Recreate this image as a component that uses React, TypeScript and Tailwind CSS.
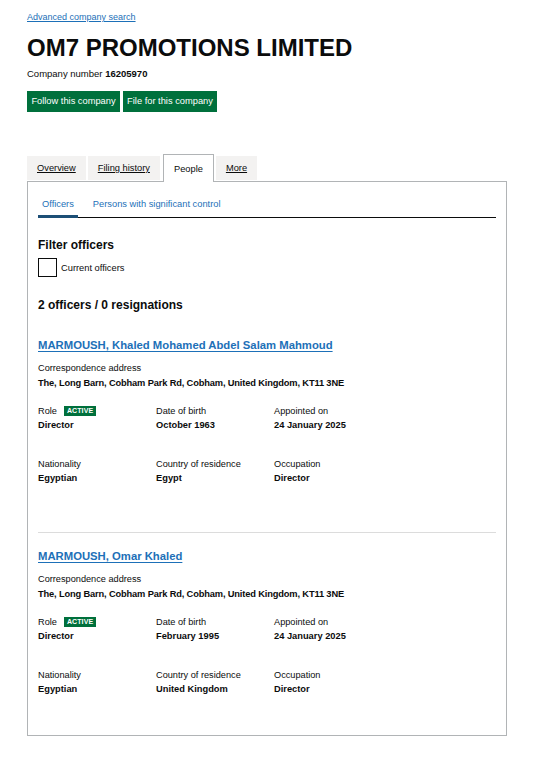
import React from "react";

const font = { fontFamily: '"Liberation Sans", Arial, sans-serif' };

type Field = { label: string; value: string; badge?: boolean };

function Cell({ f }: { f: Field }) {
  return (
    <div>
      <div className="flex items-center h-[12px] text-[9.2px] leading-[12px] text-[#0b0c0c]">
        <span>{f.label}</span>
        {f.badge && (
          <span className="ml-[7px] bg-[#00703c] text-white font-bold text-[7px] leading-[10px] h-[10px] px-[3px] tracking-[0.1px]">
            ACTIVE
          </span>
        )}
      </div>
      <div className="mt-[2px] text-[9.3px] leading-[12px] font-bold text-[#0b0c0c]">{f.value}</div>
    </div>
  );
}

function Officer({
  name,
  dob,
  country,
  first,
}: {
  name: string;
  dob: string;
  country: string;
  first?: boolean;
}) {
  return (
    <div className={first ? "mt-[25px]" : "mt-[16px]"}>
      <a
        href="#"
        className="block text-[11.3px] leading-[14px] font-bold text-[#1d70b8] underline decoration-1 underline-offset-[2px]"
      >
        {name}
      </a>
      <div className="mt-[10px] text-[9.2px] leading-[12px] text-[#0b0c0c]">Correspondence address</div>
      <div className="mt-[3px] text-[9.3px] leading-[12px] font-bold text-[#0b0c0c] tracking-[-0.15px]">
        The, Long Barn, Cobham Park Rd, Cobham, United Kingdom, KT11 3NE
      </div>
      <div className="mt-[16px] grid grid-cols-[118px_118px_118px]">
        <Cell f={{ label: "Role", value: "Director", badge: true }} />
        <Cell f={{ label: "Date of birth", value: dob }} />
        <Cell f={{ label: "Appointed on", value: "24 January 2025" }} />
      </div>
      <div className="mt-[27px] grid grid-cols-[118px_118px_118px]">
        <Cell f={{ label: "Nationality", value: "Egyptian" }} />
        <Cell f={{ label: "Country of residence", value: country }} />
        <Cell f={{ label: "Occupation", value: "Director" }} />
      </div>
    </div>
  );
}

export default function App() {
  return (
    <div style={font} className="w-[537px] min-h-[770px] bg-white pl-[27px] pt-[10px] text-[#0b0c0c]">
      <a href="#" className="block text-[9px] leading-[14px] text-[#1d70b8] underline decoration-1">
        Advanced company search
      </a>
      <h1 className="mt-[10px] text-[24px] leading-[28px] font-bold">OM7 PROMOTIONS LIMITED</h1>
      <div className="mt-[6px] text-[9.5px] leading-[12px]">
        Company number <span className="font-bold">16205970</span>
      </div>
      <div className="mt-[11px] flex gap-[3px]">
        <button className="h-[21px] w-[93px] bg-[#00703c] text-white text-[9.3px] leading-[21px] text-center">
          Follow this company
        </button>
        <button className="h-[21px] w-[94px] bg-[#00703c] text-white text-[9.3px] leading-[21px] text-center">
          File for this company
        </button>
      </div>

      <div className="mt-[42px] w-[480px]">
        <div className="flex items-end h-[27px]">
          <a href="#" className="mr-[2px] mb-[1px] h-[24px] px-[10px] bg-[#f3f2f1] text-[9.3px] leading-[24px] text-[#0b0c0c] underline decoration-1">
            Overview
          </a>
          <a href="#" className="mr-[3px] mb-[1px] h-[24px] px-[10px] bg-[#f3f2f1] text-[9.3px] leading-[24px] text-[#0b0c0c] underline decoration-1">
            Filing history
          </a>
          <div className="relative z-10 mr-[2px] -mb-px h-[28px] px-[10px] bg-white border border-b-0 border-[#b1b4b6] text-[9.3px] leading-[28px] text-[#0b0c0c]">
            People
          </div>
          <a href="#" className="mb-[1px] h-[24px] px-[10px] bg-[#f3f2f1] text-[9.3px] leading-[24px] text-[#0b0c0c] underline decoration-1">
            More
          </a>
        </div>

        <div className="border border-[#b1b4b6] px-[10px] pb-[40px]">
          <div className="pt-[16px] flex border-b border-[#0b0c0c]">
            <div className="px-[4px] pb-[5px] border-b-[3px] border-[#1d4f76] text-[9.3px] leading-[12px] text-[#1d70b8] -mb-px">
              Officers
            </div>
            <div className="ml-[11px] px-[4px] text-[9.3px] leading-[12px] text-[#1d70b8]">
              Persons with significant control
            </div>
          </div>

          <h2 className="mt-[19px] text-[12px] leading-[16px] font-bold">Filter officers</h2>
          <div className="mt-[5px] flex items-center">
            <div className="w-[19px] h-[19px] border border-[#0b0c0c] bg-white"></div>
            <span className="ml-[4px] text-[9.3px] leading-[12px]">Current officers</span>
          </div>

          <h2 className="mt-[20px] text-[12px] leading-[16px] font-bold">2 officers / 0 resignations</h2>

          <Officer
            first
            name="MARMOUSH, Khaled Mohamed Abdel Salam Mahmoud"
            dob="October 1963"
            country="Egypt"
          />
          <div className="mt-[48px] h-px bg-[#dcdcdc]"></div>
          <Officer name="MARMOUSH, Omar Khaled" dob="February 1995" country="United Kingdom" />
        </div>
      </div>
    </div>
  );
}
